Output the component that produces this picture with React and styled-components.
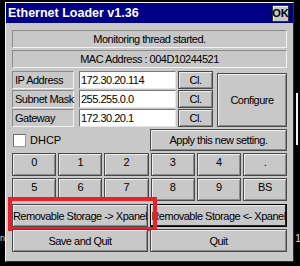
import React from 'react'
import styled, { createGlobalStyle } from 'styled-components'

const GlobalStyle = createGlobalStyle`
  html, body {
    margin: 0;
    padding: 0;
    background: #000;
  }
  body {
    font-family: "Liberation Sans", Arial, sans-serif;
  }
`

const Screen = styled.div`
  display: flex;
  width: 300px;
  height: 266px;
  box-sizing: border-box;
  padding-top: 2px;
  background: #000;
  overflow: hidden;
`

const Gutter = styled.div`
  flex: none;
  width: ${p => p.$width}px;
  display: flex;
  flex-direction: column;
  overflow: hidden;
`

const GutterGlyph = styled.span`
  display: block;
  margin-top: ${p => p.$top}px;
  margin-left: ${p => p.$left}px;
  color: #d8d8d8;
  font-size: ${p => p.$size || 11}px;
  line-height: 10px;
`

const ScrollLine = styled.div`
  margin: 91px 0 0 2px;
  width: 2px;
  height: 52px;
  background: #f2f2f2;
`

const Dialog = styled.div`
  flex: none;
  width: 289px;
  height: 260px;
  box-sizing: border-box;
  display: flex;
  flex-direction: column;
  background: #c8c8c8;
  border-top: 1px solid #f4f4f4;
  border-left: 1px solid #f4f4f4;
  border-right: 1px solid #303030;
  border-bottom: 1px solid #303030;
`

const TitleBar = styled.div`
  height: 20px;
  flex: none;
  display: flex;
  align-items: center;
  justify-content: space-between;
  padding: 0 4px 0 2px;
  background: #000084;
`

const Title = styled.span`
  color: #fff;
  font-size: 12.5px;
  font-weight: bold;
`

const OkButton = styled.button`
  width: 17px;
  height: 17px;
  padding: 0;
  display: flex;
  align-items: center;
  justify-content: center;
  font-family: inherit;
  font-size: 11px;
  font-weight: bold;
  color: #000;
  background: #c8c8c8;
  border: 1px solid #303030;
  box-shadow: inset 1px 1px #f4f4f4;
`

const Body = styled.div`
  flex: 1;
  display: flex;
  flex-direction: column;
  padding: 7px 6px 9px;
  font-size: 11px;
  letter-spacing: -0.5px;
  color: #000;
`

const Sunken = styled.div`
  height: 18px;
  box-sizing: border-box;
  display: flex;
  align-items: center;
  justify-content: ${p => (p.$left ? 'flex-start' : 'center')};
  padding-left: ${p => (p.$left ? 2 : 0)}px;
  margin-top: ${p => p.$gap || 0}px;
  width: ${p => (p.$width ? `${p.$width}px` : 'auto')};
  flex: ${p => (p.$width ? 'none' : 'auto')};
  border-top: 1px solid #8a8a8a;
  border-left: 1px solid #8a8a8a;
  border-right: 1px solid #f2f2f2;
  border-bottom: 1px solid #f2f2f2;
  white-space: nowrap;
`

const AddressBlock = styled.div`
  display: flex;
  height: 56px;
  margin-top: 3px;
`

const FieldGroup = styled.div`
  display: flex;
  flex-direction: column;
  gap: 1px;
`

const FieldRow = styled.div`
  display: flex;
  height: 18px;
`

const Field = styled.div`
  width: 97px;
  margin-left: 5px;
  box-sizing: border-box;
  display: flex;
  align-items: center;
  padding-left: 1px;
  background: #fff;
  border-top: 1px solid #7a7a7a;
  border-left: 1px solid #7a7a7a;
  border-right: 1px solid #e6e6e6;
  border-bottom: 1px solid #e6e6e6;
`

const Button = styled.button`
  box-sizing: border-box;
  padding: 0;
  display: flex;
  align-items: center;
  justify-content: center;
  overflow: hidden;
  white-space: nowrap;
  font-family: inherit;
  font-size: 11px;
  letter-spacing: inherit;
  color: #000;
  background: #c8c8c8;
  border: 1px solid ${p => (p.$default ? '#000' : '#4a4a4a')};
  box-shadow: ${p => (p.$default
    ? 'inset -1px -1px #262626, inset 1px 1px #ececec'
    : 'inset 1px 1px #ececec, inset -1px -1px #8a8a8a')};
`

const ClButton = styled(Button)`
  width: 35px;
  margin-left: 2px;
`

const ConfigureButton = styled(Button)`
  width: 70px;
  margin: 2px 0 0 4px;
`

const KeyButton = styled(Button)`
  padding-bottom: 5px;
`

const OptionRow = styled.div`
  display: flex;
  height: 22px;
  margin-top: 2px;
`

const CheckLabel = styled.label`
  width: 138px;
  display: flex;
  align-items: center;
  gap: 4px;
  padding-left: 1px;
  box-sizing: border-box;
  letter-spacing: 0;
`

const CheckBox = styled.span`
  width: 13px;
  height: 13px;
  box-sizing: border-box;
  background: #fff;
  border-top: 1px solid #6e6e6e;
  border-left: 1px solid #6e6e6e;
  border-right: 1px solid #9a9a9a;
  border-bottom: 1px solid #9a9a9a;
`

const WideButton = styled(Button)`
  flex: 1;
`

const Keypad = styled.div`
  display: grid;
  grid-template-columns: repeat(6, 1fr);
  grid-auto-rows: 23px;
  gap: 2px;
  margin-top: 2px;
`

const HalfRow = styled.div`
  position: relative;
  display: grid;
  grid-template-columns: 136px 1fr;
  gap: 2px;
  height: 23px;
  margin-top: ${p => p.$gap}px;
`

const Highlight = styled.div`
  position: absolute;
  left: -4px;
  top: -7px;
  width: 149px;
  height: 34px;
  box-sizing: border-box;
  border: 4px solid #e8202a;
  pointer-events: none;
`

const fields = [
  { label: 'IP Address', value: '172.30.20.114' },
  { label: 'Subnet Mask', value: '255.255.0.0' },
  { label: 'Gateway', value: '172.30.20.1' }
]

const keys = ['0', '1', '2', '3', '4', '.', '5', '6', '7', '8', '9', 'BS']

const App = () => (
  <Screen>
    <GlobalStyle />
    <Gutter $width={5}>
      <GutterGlyph $top={231} $left={0} $size={9}>n</GutterGlyph>
    </Gutter>
    <Dialog>
      <TitleBar>
        <Title>Ethernet Loader v1.36</Title>
        <OkButton>OK</OkButton>
      </TitleBar>
      <Body>
        <Sunken>Monitoring thread started.</Sunken>
        <Sunken $gap={2}>MAC Address : 004D10244521</Sunken>
        <AddressBlock>
          <FieldGroup>
            {fields.map(f => (
              <FieldRow key={f.label}>
                <Sunken $left $width={62}>{f.label}</Sunken>
                <Field>{f.value}</Field>
                <ClButton>Cl.</ClButton>
              </FieldRow>
            ))}
          </FieldGroup>
          <ConfigureButton>Configure</ConfigureButton>
        </AddressBlock>
        <OptionRow>
          <CheckLabel>
            <CheckBox />
            DHCP
          </CheckLabel>
          <WideButton>Apply this new setting.</WideButton>
        </OptionRow>
        <Keypad>
          {keys.map(k => <KeyButton key={k}>{k}</KeyButton>)}
        </Keypad>
        <HalfRow $gap={3}>
          <Button>Removable Storage -&gt; Xpanel</Button>
          <Button $default>Removable Storage &lt;- Xpanel</Button>
          <Highlight />
        </HalfRow>
        <HalfRow $gap={2}>
          <Button>Save and Quit</Button>
          <Button>Quit</Button>
        </HalfRow>
      </Body>
    </Dialog>
    <Gutter $width={6}>
      <ScrollLine />
      <GutterGlyph $top={88} $left={1}>1</GutterGlyph>
    </Gutter>
  </Screen>
)

export default App
